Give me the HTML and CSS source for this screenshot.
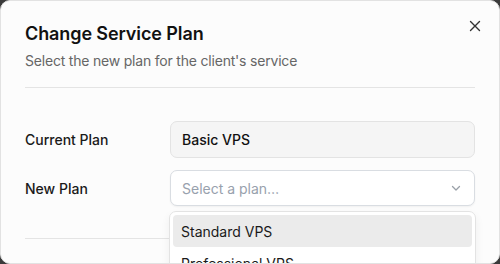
FILE: index.html
```html
<!DOCTYPE html>
<html>
<head>
<meta charset="utf-8">
<link rel="stylesheet" href="styles.css">
</head>
<body>
<div class="dialog">
  <button class="close" aria-label="Close">
    <svg width="12" height="12" viewBox="0 0 12 12"><path d="M1.5 1.5 L10.5 10.5 M10.5 1.5 L1.5 10.5" stroke="#333" stroke-width="1.4" stroke-linecap="round" fill="none"/></svg>
  </button>
  <div class="header">
    <h2 class="title">Change Service Plan</h2>
    <p class="subtitle">Select the new plan for the client's service</p>
  </div>
  <div class="body">
    <div class="row">
      <label class="label">Current Plan</label>
      <div class="field readonly">Basic VPS</div>
    </div>
    <div class="row">
      <label class="label">New Plan</label>
      <div class="select-wrap">
        <div class="field select">
          <span class="placeholder">Select a plan…</span>
          <svg class="chev" width="12" height="12" viewBox="0 0 12 12"><path d="M2.5 4.5 L6 8 L9.5 4.5" stroke="#9aa0a8" stroke-width="1.3" fill="none" stroke-linecap="round" stroke-linejoin="round"/></svg>
        </div>
        <div class="menu">
          <div class="item active">Standard VPS</div>
          <div class="item">Professional VPS</div>
        </div>
      </div>
    </div>
  </div>
  <div class="footer-line"></div>
</div>
</body>
</html>
```
FILE: styles.css
```css
* { box-sizing: border-box; }
html, body { margin: 0; padding: 0; }
body {
  background: #3a3a3a;
  font-family: Inter, "Noto Sans", sans-serif;
  width: 500px;
  height: 264px;
  overflow: hidden;
}
.dialog {
  position: relative;
  width: 500px;
  height: 264px;
  background: #fcfcfc;
  border: 1px solid #e2e2e2;
  border-radius: 10px;
  overflow: hidden;
  padding: 0 24px;
}
.close {
  position: absolute;
  top: 18px;
  right: 17px;
  width: 14px;
  height: 14px;
  border: 0;
  padding: 0;
  background: none;
  display: flex;
  align-items: center;
  justify-content: center;
}
.header {
  padding-top: 21px;
  padding-bottom: 16px;
  border-bottom: 1px solid #e4e4e4;
}
.title {
  margin: 0;
  font-size: 18px;
  line-height: 24px;
  font-weight: 600;
  color: #111;
  letter-spacing: -0.1px;
}
.subtitle {
  margin: 5px 0 0;
  font-size: 14px;
  line-height: 20px;
  color: #666;
  letter-spacing: -0.2px;
}
.body {
  padding-top: 33px;
  display: flex;
  flex-direction: column;
  gap: 12px;
}
.row {
  display: flex;
  align-items: flex-start;
}
.label {
  width: 145px;
  flex: none;
  font-size: 14px;
  font-weight: 500;
  color: #1a1a1a;
  line-height: 37px;
}
.field {
  flex: 1;
  height: 37px;
  border-radius: 7px;
  border: 1px solid #e3e3e3;
  padding: 0 11px;
  display: flex;
  align-items: center;
  font-size: 14px;
}
.readonly {
  background: #f5f5f5;
  font-weight: 500;
  color: #111;
}
.select-wrap {
  flex: 1;
  position: relative;
}
.select {
  background: #fff;
  border-color: #d9dde2;
  height: 36px;
  justify-content: space-between;
  box-shadow: 0 1px 2px rgba(0,0,0,0.05);
}
.placeholder { color: #98a1ad; }
.chev { margin-right: 1px; }
.menu {
  position: absolute;
  top: 41px;
  left: -1px;
  right: -1px;
  background: #fff;
  border: 1px solid #e3e3e3;
  border-radius: 7px;
  padding: 3px;
  z-index: 2;
  box-shadow: 0 4px 10px rgba(0,0,0,0.06);
}
.item {
  height: 32px;
  padding: 0 8px;
  display: flex;
  align-items: center;
  font-size: 14px;
  color: #1a1a1a;
  border-radius: 4px;
}
.item.active { background: #ebebeb; }
.footer-line {
  margin-top: 31px;
  border-top: 1px solid #e4e4e4;
}
```
